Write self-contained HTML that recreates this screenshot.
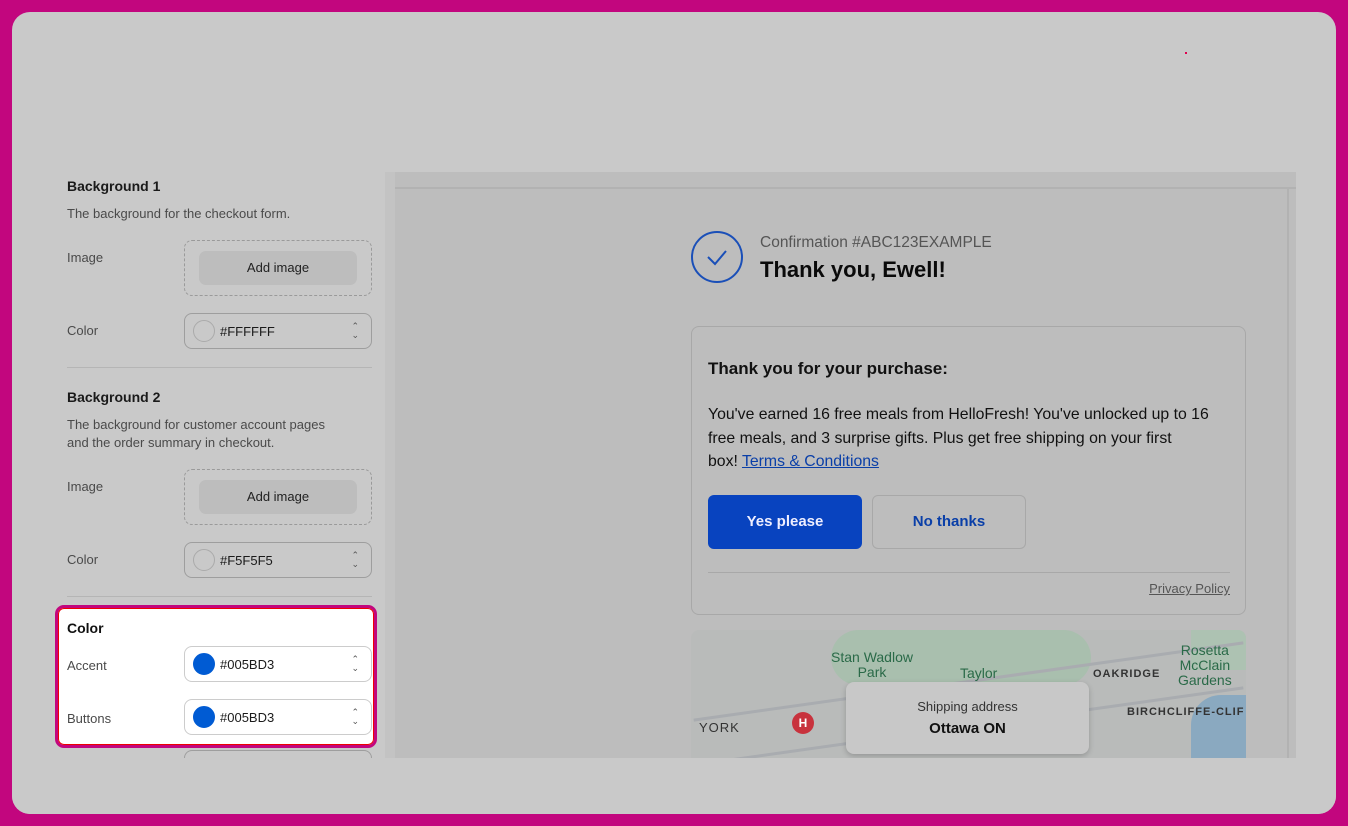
<!DOCTYPE html>
<html><head><style>
*{box-sizing:border-box;margin:0;padding:0}
body{width:1348px;height:826px;background:#c2067e;font-family:"Liberation Sans",sans-serif;position:relative;overflow:hidden}
.frame{position:absolute;left:12px;top:12px;width:1324px;height:802px;background:#c9c9c9;border-radius:18px;overflow:hidden}
.a{position:absolute}
.h{font-size:14px;font-weight:bold;color:#1a1a1a}
.d{font-size:13px;color:#4a4a4a;line-height:18px}
.l{font-size:13px;color:#4a4a4a}
.addbox{position:absolute;left:184px;width:188px;height:56px;border:1px dashed #9a9a9a;border-radius:8px}
.addbtn{position:absolute;left:14px;top:10px;width:158px;height:34px;background:#bdbdbd;border-radius:7px;font-size:13px;color:#222;text-align:center;line-height:34px}
.sel{position:absolute;left:184px;width:188px;height:36px;border:1px solid #9e9e9e;border-radius:8px;font-size:13px;color:#1a1a1a}
.sel .sw{position:absolute;left:8px;top:6px;width:22px;height:22px;border-radius:50%;border:1px solid #aaa;background:#c9c9c9}
.sel span{position:absolute;left:35px;top:10px}
.sel i{position:absolute;right:12px;top:8px;font-style:normal;font-size:9px;line-height:9px;color:#555}
.hr{position:absolute;left:67px;width:305px;height:1px;background:#b5b5b5}
</style></head><body>
<div class="frame">
<div class="a" style="left:1173px;top:40px;width:2px;height:2px;background:#e0004f"></div>
</div>
<div class="a" style="left:0;top:0;width:1348px;height:826px">
<div class="a h" style="left:67px;top:178px">Background 1</div>
<div class="a d" style="left:67px;top:205px">The background for the checkout form.</div>
<div class="a l" style="left:67px;top:250px">Image</div>
<div class="addbox" style="top:240px"><div class="addbtn">Add image</div></div>
<div class="a l" style="left:67px;top:323px">Color</div>
<div class="sel" style="top:313px"><div class="sw"></div><span>#FFFFFF</span><i>&#8963;<br>&#8964;</i></div>
<div class="hr" style="top:367px"></div>
<div class="a h" style="left:67px;top:389px">Background 2</div>
<div class="a d" style="left:67px;top:416px">The background for customer account pages<br>and the order summary in checkout.</div>
<div class="a l" style="left:67px;top:479px">Image</div>
<div class="addbox" style="top:469px"><div class="addbtn">Add image</div></div>
<div class="a l" style="left:67px;top:552px">Color</div>
<div class="sel" style="top:542px"><div class="sw"></div><span>#F5F5F5</span><i>&#8963;<br>&#8964;</i></div>
<div class="hr" style="top:596px"></div>
<div class="sel" style="top:750px;height:20px;border-bottom:none"></div>

<div class="a" style="left:55px;top:605px;width:322px;height:143px;border:3px solid #c2067e;border-radius:9px;background:#fff;box-shadow:inset 0 0 0 1px #e00">
<div class="a h" style="left:9px;top:12px;color:#111">Color</div>
<div class="a l" style="left:9px;top:50px">Accent</div>
<div class="sel" style="left:126px;top:38px;border-color:#ccc"><div class="sw" style="background:#005bd3;border-color:#005bd3"></div><span>#005BD3</span><i>&#8963;<br>&#8964;</i></div>
<div class="a l" style="left:9px;top:103px">Buttons</div>
<div class="sel" style="left:126px;top:91px;border-color:#ccc"><div class="sw" style="background:#005bd3;border-color:#005bd3"></div><span>#005BD3</span><i>&#8963;<br>&#8964;</i></div>
</div>

<div class="a" style="left:385px;top:172px;width:911px;height:586px;background:#bdbdbd;border-left:10px solid #c3c3c3">
<div class="a" style="left:0;top:15px;width:901px;height:2px;background:#b2b2b2"></div>
<div class="a" style="left:892px;top:17px;width:2px;height:569px;background:#b2b2b2"></div>
<div class="a" style="left:296px;top:59px;width:52px;height:52px;border:2px solid #1a4fb8;border-radius:50%"></div>
<svg class="a" style="left:306px;top:71px" width="32" height="28"><path d="M7 14 L14 21 L25 8" stroke="#1a4fb8" stroke-width="2" fill="none"/></svg>
<div class="a" style="left:365px;top:62px;font-size:15.5px;color:#555">Confirmation #ABC123EXAMPLE</div>
<div class="a" style="left:365px;top:85px;font-size:22px;font-weight:bold;color:#0a0a0a">Thank you, Ewell!</div>
<div class="a" style="left:296px;top:154px;width:555px;height:289px;border:1px solid #a8a8a8;border-radius:8px">
<div class="a" style="left:16px;top:32px;font-size:17px;font-weight:bold;color:#111">Thank you for your purchase:</div>
<div class="a" style="left:16px;top:76px;font-size:15.8px;line-height:23.5px;color:#111;white-space:nowrap">You've earned 16 free meals from HelloFresh! You've unlocked up to 16<br>free meals, and 3 surprise gifts. Plus get free shipping on your first<br>box! <u style="color:#0a3fa8">Terms &amp; Conditions</u></div>
<div class="a" style="left:16px;top:168px;width:154px;height:54px;background:#0843bf;border-radius:6px;color:#eef;font-size:15px;font-weight:bold;text-align:center;line-height:54px">Yes please</div>
<div class="a" style="left:180px;top:168px;width:154px;height:54px;border:1px solid #a8a8a8;border-radius:6px;color:#0a3fa8;font-size:15px;font-weight:bold;text-align:center;line-height:52px">No thanks</div>
<div class="a" style="left:16px;top:245px;width:522px;height:1px;background:#a8a8a8"></div>
<div class="a" style="right:15px;top:254px;font-size:13px;color:#555;text-decoration:underline">Privacy Policy</div>
</div>
<div class="a" style="left:296px;top:458px;width:555px;height:130px;background:#b9bbba;border-radius:8px 8px 0 0;overflow:hidden">
<div class="a" style="left:140px;top:0;width:260px;height:55px;background:#a9bfae;border-radius:30px"></div>
<div class="a" style="left:500px;top:0;width:55px;height:40px;background:#adc2b2"></div>
<div class="a" style="left:500px;top:65px;width:55px;height:70px;background:#8aa9c0;border-radius:30px 0 0 0"></div>
<div class="a" style="left:0;top:50px;width:555px;height:3px;background:#a9acb0;transform:rotate(-8deg)"></div>
<div class="a" style="left:0;top:95px;width:555px;height:3px;background:#a9acb0;transform:rotate(-8deg)"></div>
<div class="a" style="left:140px;top:20px;font-size:14px;color:#2a6a48;line-height:15px;text-align:center">Stan Wadlow<br>Park</div>
<div class="a" style="left:269px;top:35px;font-size:14px;color:#2a6a48">Taylor</div>
<div class="a" style="left:487px;top:13px;font-size:14px;color:#2a6a48;line-height:15px;text-align:center">Rosetta<br>McClain<br>Gardens</div>
<div class="a" style="left:402px;top:38px;font-size:11px;color:#333;font-weight:bold;letter-spacing:1px">OAKRIDGE</div>
<div class="a" style="left:436px;top:76px;font-size:11px;color:#333;font-weight:bold;letter-spacing:1px">BIRCHCLIFFE-CLIF</div>
<div class="a" style="left:8px;top:90px;font-size:13px;color:#333;letter-spacing:1px">YORK</div>
<div class="a" style="left:101px;top:82px;width:22px;height:22px;border-radius:50%;background:#c8323d;color:#fff;font-size:12px;font-weight:bold;text-align:center;line-height:22px">H</div>
<div class="a" style="left:155px;top:52px;width:243px;height:72px;background:#c8c8c8;border-radius:8px;box-shadow:0 2px 6px rgba(0,0,0,.2);text-align:center">
<div style="font-size:13px;color:#333;margin-top:17px">Shipping address</div>
<div style="font-size:15px;color:#111;font-weight:bold;margin-top:6px">Ottawa ON</div>
</div>
</div>
</div>
<div class="a" style="left:12px;top:758px;width:1324px;height:56px;background:#c9c9c9;border-radius:0 0 18px 18px"></div>
</div>
</body></html>
